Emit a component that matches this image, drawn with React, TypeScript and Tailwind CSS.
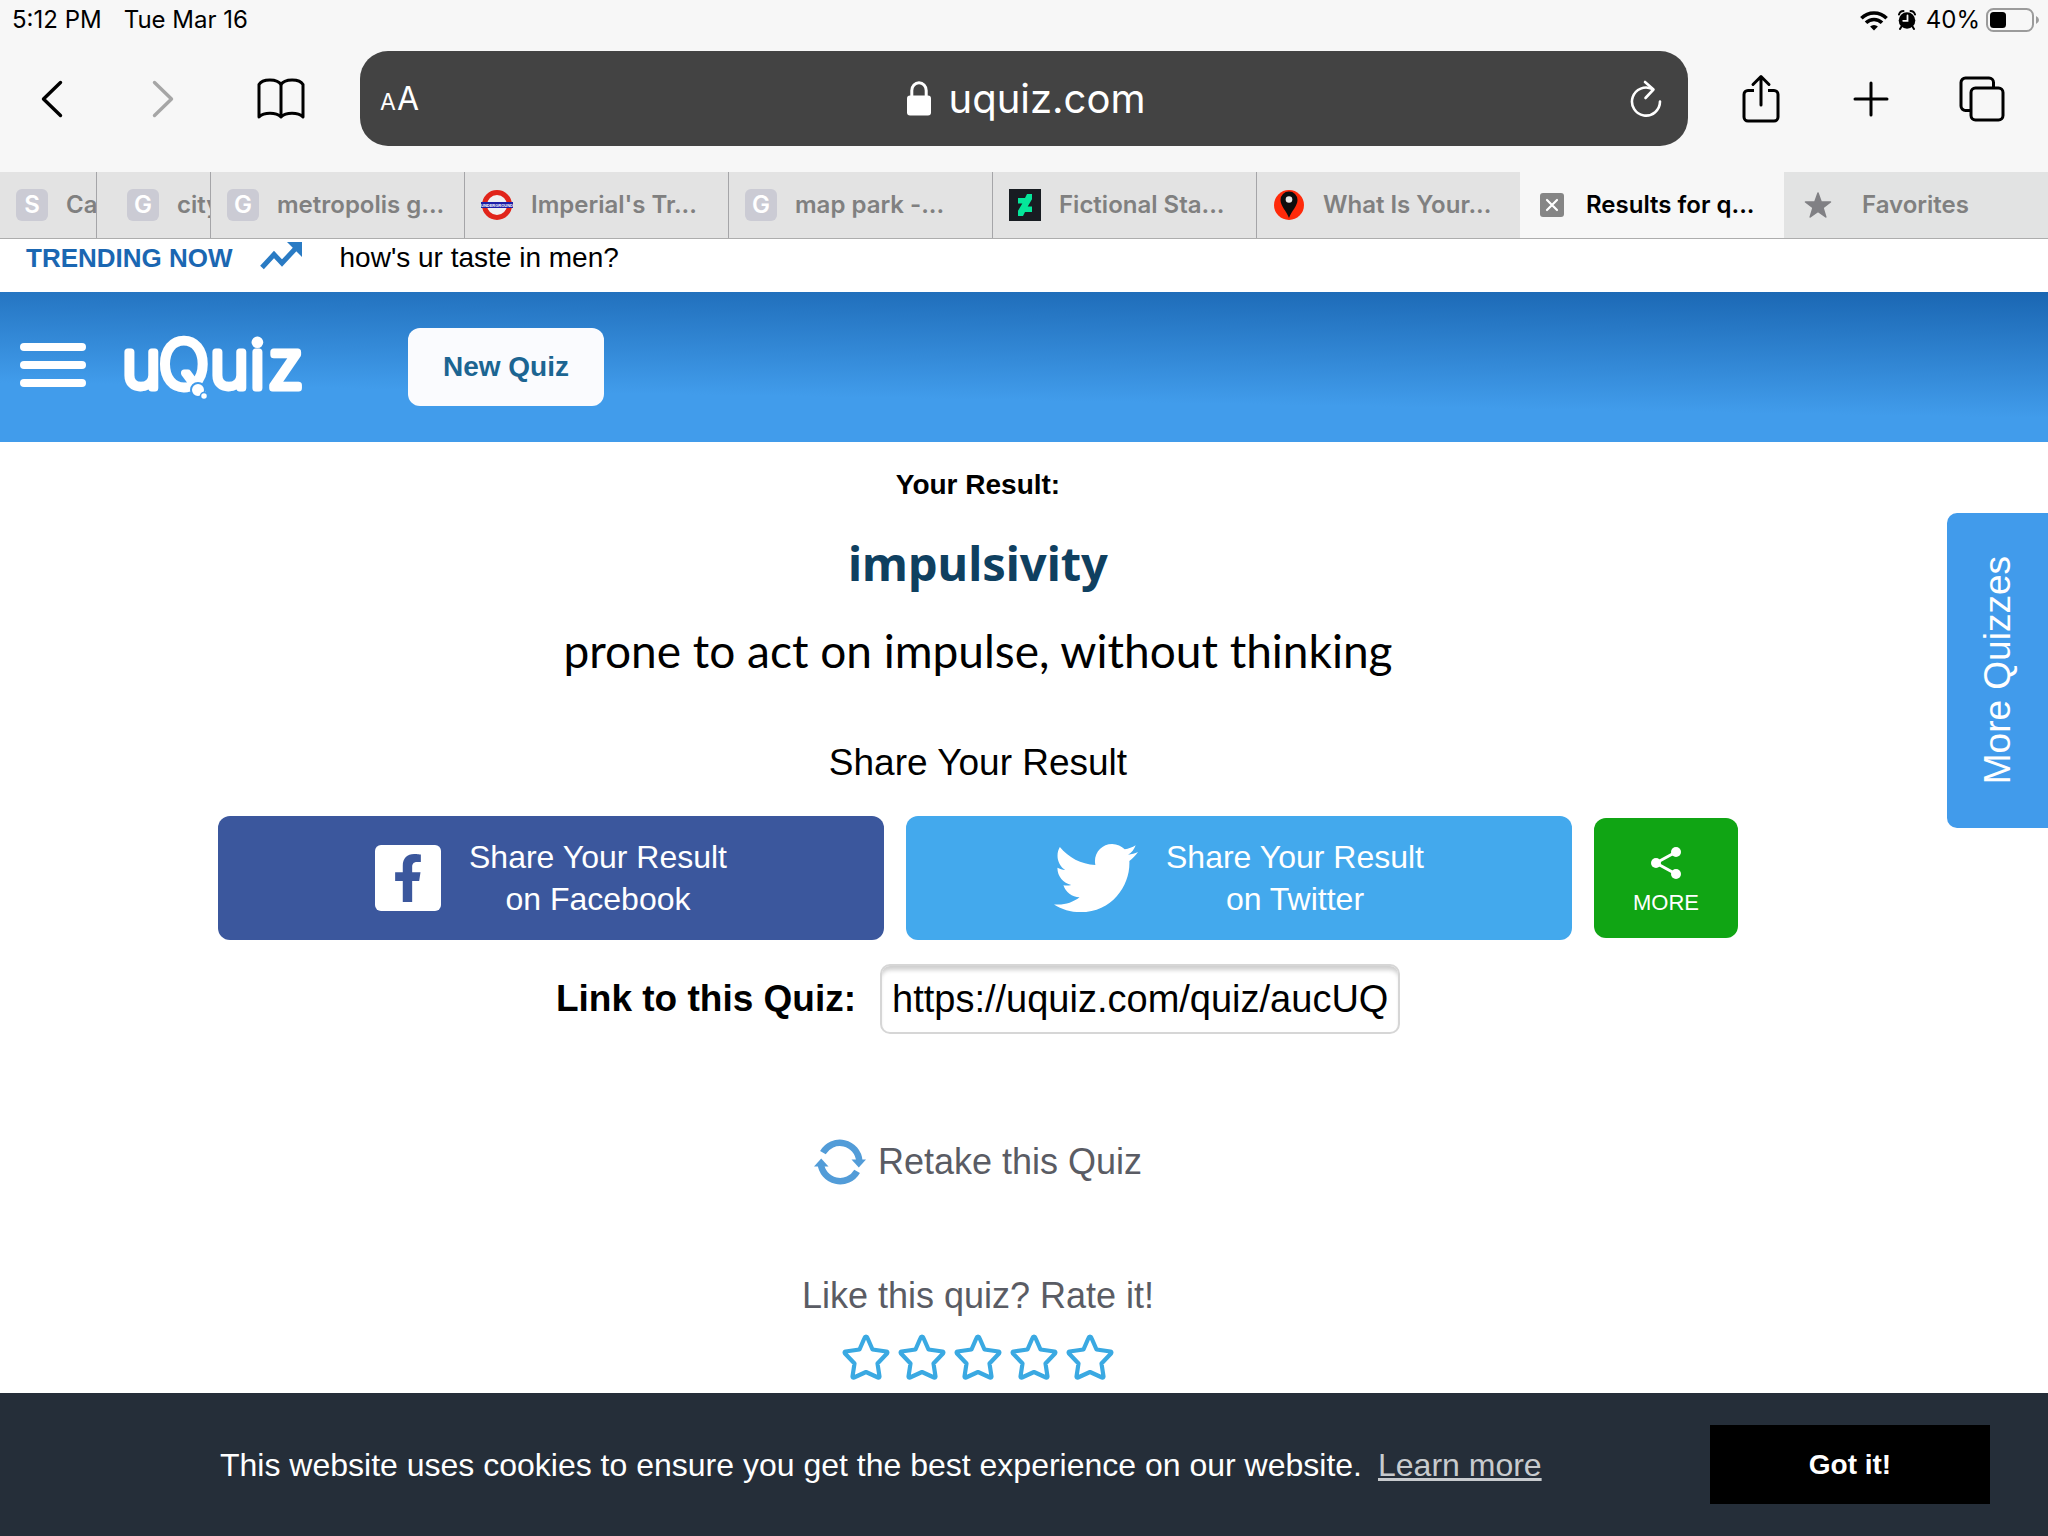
import type { ReactNode } from "react";
import { FaFacebookF, FaTwitter } from "react-icons/fa";

/* ---------- status bar glyphs ---------- */

function WifiIcon() {
  return (
    <svg width="28" height="21" viewBox="0 0 28 21" fill="none" stroke="#000" strokeWidth="3.6" aria-hidden="true">
      <path d="M1.4 8.2a17.8 17.8 0 0 1 25.2 0" />
      <path d="M6 12.8a11.3 11.3 0 0 1 16 0" />
      <path d="M14 20.5l-3.9-4a5.5 5.5 0 0 1 7.8 0z" fill="#000" stroke="none" />
    </svg>
  );
}

function AlarmIcon() {
  return (
    <svg width="18" height="20" viewBox="0 0 18 20" aria-hidden="true">
      <circle cx="9" cy="10.5" r="8.3" fill="#000" />
      <path d="M1 4.5Q2 1 5.5 1M17 4.5Q16 1 12.5 1M3.5 16.5L2 19M14.5 16.5L16 19" stroke="#000" strokeWidth="2" fill="none" strokeLinecap="round" />
      <path d="M9.5 5.5v5.3H5.2" stroke="#f7f7f7" strokeWidth="1.8" fill="none" strokeLinecap="round" />
    </svg>
  );
}

function BatteryIcon() {
  return (
    <svg width="54" height="24" viewBox="0 0 54 24" aria-hidden="true">
      <rect x="1" y="1" width="46" height="22" rx="6.5" fill="none" stroke="#9b9b9b" strokeWidth="2" />
      <rect x="4" y="4" width="16" height="16" rx="3.5" fill="#000" />
      <path d="M50 8q3 1.300 3 4t-3 4z" fill="#9b9b9b" />
    </svg>
  );
}

/* ---------- toolbar icons ---------- */

function BackIcon() {
  return (
    <svg width="22" height="38" viewBox="0 0 22 38" fill="none" stroke="currentColor" strokeWidth="3.4" strokeLinecap="round" strokeLinejoin="round" aria-hidden="true">
      <path d="M19.500 2.500L2.500 19l17 16.500" />
    </svg>
  );
}

function ForwardIcon() {
  return (
    <svg width="22" height="38" viewBox="0 0 22 38" fill="none" stroke="currentColor" strokeWidth="3.4" strokeLinecap="round" strokeLinejoin="round" aria-hidden="true">
      <path d="M2.500 2.500L19.500 19l-17 16.500" />
    </svg>
  );
}

function BookIcon() {
  return (
    <svg width="48" height="42" viewBox="0 0 48 42" fill="none" stroke="currentColor" strokeWidth="3" strokeLinejoin="round" aria-hidden="true">
      <path d="M24 6.500C20.500 .5 5.500.2 2 6.500V39c5-5 17-5 22 0 5-5 17-5 22 0V6.500C42.500.2 27.500.5 24 6.500z" />
      <path d="M24 6.500V39" />
    </svg>
  );
}

function LockIcon() {
  return (
    <svg width="24" height="35" viewBox="0 0 24 35" aria-hidden="true">
      <path d="M4.800 17V9.500a7.200 7.800 0 0 1 14.400 0V17" fill="none" stroke="#fff" strokeWidth="3" />
      <rect x="0" y="14.500" width="24" height="20" rx="3" fill="#fff" />
    </svg>
  );
}

function ReloadIcon() {
  return (
    <svg width="32" height="38" viewBox="0 0 32 38" fill="none" stroke="#fff" strokeWidth="2.600" strokeLinecap="round" strokeLinejoin="round" aria-hidden="true">
      <path d="M30 21.500A14 14 0 1 1 22.500 9.200" />
      <path d="M15 2l8.500 7.500L15.500 18" />
    </svg>
  );
}

function ShareIcon() {
  return (
    <svg width="38" height="50" viewBox="0 0 38 50" fill="none" stroke="currentColor" strokeWidth="3" strokeLinecap="round" strokeLinejoin="round" aria-hidden="true">
      <path d="M12 16.500H6a4 4 0 0 0-4 4V43a4 4 0 0 0 4 4h26a4 4 0 0 0 4-4V20.500a4 4 0 0 0-4-4h-6" strokeLinecap="butt" />
      <path d="M19 31V3M11 10.500L19 2.500l8 8" />
    </svg>
  );
}

function PlusIcon() {
  return (
    <svg width="36" height="36" viewBox="0 0 36 36" fill="none" stroke="currentColor" strokeWidth="3" strokeLinecap="round" aria-hidden="true">
      <path d="M18 2v32M2 18h32" />
    </svg>
  );
}

function TabsIcon() {
  return (
    <svg width="46" height="46" viewBox="0 0 46 46" fill="none" stroke="currentColor" strokeWidth="3" aria-hidden="true">
      <path d="M12 34.500H6.500a4.500 4.500 0 0 1-4.500-4.500V6.500A4.500 4.500 0 0 1 6.500 2H30a4.500 4.500 0 0 1 4.500 4.500V12" />
      <rect x="12" y="12" width="32" height="32" rx="4.500" />
    </svg>
  );
}

/* ---------- tab favicons ---------- */

function LetterFavicon({ letter }: { letter: string }) {
  return (
    <span className="flex size-8 shrink-0 items-center justify-center rounded-md bg-[#cbcbd4] text-2xl text-white">
      {letter}
    </span>
  );
}

function UndergroundFavicon() {
  return (
    <svg className="shrink-0" width="32" height="32" viewBox="0 0 32 32" aria-hidden="true">
      <circle cx="16" cy="16" r="12.500" fill="#f1f1f1" stroke="#e1251b" strokeWidth="5" />
      <rect x="0" y="13" width="32" height="6" fill="#1c1fa8" />
      <text x="16" y="17.500" textAnchor="middle" fontSize="4" fontWeight="700" fill="#fff" fontFamily="Liberation Sans, sans-serif">
        UNDERGROUND
      </text>
    </svg>
  );
}

function DeviantFavicon() {
  return (
    <svg className="shrink-0" width="32" height="32" viewBox="0 0 32 32" aria-hidden="true">
      <rect width="32" height="32" fill="#181c22" />
      <path d="M18 5h5v5.200l-4.300 7.300H23V23h-7l-2 4H9v-5.200l4.300-7.300H9V9h7z" fill="#05e69a" />
    </svg>
  );
}

function PinFavicon() {
  return (
    <svg className="shrink-0" width="32" height="32" viewBox="0 0 32 32" aria-hidden="true">
      <circle cx="16" cy="16" r="15" fill="#ff2a0a" />
      <path d="M16 29C13.500 22 7.500 17 7.500 11a8.500 8.500 0 0 1 17 0c0 6-6 11-8.500 18z" fill="#0d0d0d" />
      <circle cx="16" cy="10.500" r="3.300" fill="#e8e8e8" />
    </svg>
  );
}

function CloseFavicon() {
  return (
    <svg className="shrink-0" width="24" height="24" viewBox="0 0 24 24" aria-hidden="true">
      <rect width="24" height="24" rx="3" fill="#858585" />
      <path d="M7 7l10 10M17 7L7 17" stroke="#fff" strokeWidth="2.200" strokeLinecap="round" />
    </svg>
  );
}

function FavoriteStar() {
  return (
    <svg className="shrink-0" width="28" height="26" viewBox="0 0 28 26" aria-hidden="true">
      <path d="M14 1l3.200 9H26.500l-7.500 5.700L21.800 25 14 19.500 6.200 25 9 15.700 1.500 10h9.300z" fill="#808084" stroke="#808084" strokeWidth="1.500" strokeLinejoin="round" />
    </svg>
  );
}

/* ---------- page icons ---------- */

function TrendIcon() {
  return (
    <svg width="42" height="28" viewBox="0 0 42 28" aria-hidden="true">
      <path d="M2 25.500L14 12.500l8 8.500L36 6" fill="none" stroke="#2a7bc4" strokeWidth="5" />
      <path d="M27 0h15v15z" fill="#2a7bc4" />
    </svg>
  );
}

function Logo() {
  return (
    <svg className="overflow-visible" width="184" height="84" viewBox="0 -8 184 84" role="img" aria-label="uQuiz">
      <text
        x="0 37 88 128 146"
        y="55"
        fontFamily="Inter, sans-serif"
        fontWeight="200"
        fontSize="66"
        fill="#fff"
        stroke="#fff"
        strokeWidth="7"
        strokeLinejoin="round"
      >
        uQuiz
      </text>
      <circle cx="76" cy="57" r="7" fill="#fff" stroke="#409aea" strokeWidth="2" />
      <circle cx="82" cy="63" r="3.500" fill="#fff" stroke="#409aea" strokeWidth="1.500" />
    </svg>
  );
}

function ShareNodesIcon() {
  return (
    <svg width="30" height="32" viewBox="0 0 30 32" aria-hidden="true">
      <path d="M25 5L5 16l20 11" fill="none" stroke="#fff" strokeWidth="3" />
      <circle cx="25" cy="5" r="5" fill="#fff" />
      <circle cx="5" cy="16" r="5" fill="#fff" />
      <circle cx="25" cy="27" r="5" fill="#fff" />
    </svg>
  );
}

function RetakeIcon() {
  return (
    <svg width="52" height="46" viewBox="0 0 52 46" aria-hidden="true">
      <g fill="none" stroke="#529cd8" strokeWidth="6.500">
        <path d="M8.900 13.700A19.500 19.500 0 0 1 45.300 22" />
        <path d="M43.100 32.300A19.500 19.500 0 0 1 6.700 24" />
      </g>
      <g fill="#529cd8">
        <path d="M37.500 20.500h14.500L44.800 28.500z" />
        <path d="M14.500 27.500H0L7.200 19.500z" />
      </g>
    </svg>
  );
}

function RatingStar() {
  return (
    <svg width="48" height="46" viewBox="0 0 48 46" fill="none" stroke="#3aa9e2" strokeWidth="4.200" strokeLinejoin="round" aria-hidden="true">
      <path d="M24 2.500Q25 2.500 25.500 4L30.500 15.500 44.500 17.500Q46 18 45 19.500L35.500 29.500 37.500 42.500Q37.500 44 36 43.500L24 38 12 43.500Q10.500 44 10.500 42.500L12.500 29.500 3 19.500Q2 18 3.500 17.500L17.500 15.500 22.500 4Q23 2.500 24 2.500z" />
    </svg>
  );
}

/* ---------- browser tabs ---------- */

type Tab = { title: string; icon: ReactNode; look: string };

const idle = "gap-[18px] border-r border-[#a5a5a8] bg-[#e3e3e3] text-[#808080]";

const tabs: Tab[] = [
  { title: "Ca", icon: <LetterFavicon letter="S" />, look: `${idle} pl-4` },
  { title: "city", icon: <LetterFavicon letter="G" />, look: `${idle} pl-[30px]` },
  { title: "metropolis g...", icon: <LetterFavicon letter="G" />, look: `${idle} pl-4` },
  { title: "Imperial's Tr...", icon: <UndergroundFavicon />, look: `${idle} pl-4` },
  { title: "map park -...", icon: <LetterFavicon letter="G" />, look: `${idle} pl-4` },
  { title: "Fictional Sta...", icon: <DeviantFavicon />, look: `${idle} pl-4` },
  {
    title: "What Is Your...",
    icon: <PinFavicon />,
    look: "gap-[18px] bg-[#e3e3e3] pl-4 text-[#808080]",
  },
  { title: "Results for q...", icon: <CloseFavicon />, look: "gap-[22px] bg-[#f7f7f7] pl-5 text-black" },
  { title: "Favorites", icon: <FavoriteStar />, look: "gap-[30px] bg-[#e2e3e3] pl-5 text-[#808080]" },
];

function BrowserChrome() {
  return (
    <div className="bg-[#f7f7f7] font-['Inter',sans-serif] text-black">
      <div className="flex h-10 items-center justify-between pr-2 pl-3 text-2xl">
        <div className="flex gap-[22px]">
          <span>5:12 PM</span>
          <span>Tue Mar 16</span>
        </div>
        <div className="flex items-center">
          <WifiIcon />
          <span className="ml-2.5">
            <AlarmIcon />
          </span>
          <span className="ml-2.5">40%</span>
          <span className="ml-1.5">
            <BatteryIcon />
          </span>
        </div>
      </div>

      <div className="flex h-[132px] items-center pt-[11px] pb-[26px]">
        <div className="flex items-center pr-[55px] pl-[41px]">
          <button aria-label="Back">
            <BackIcon />
          </button>
          <button aria-label="Forward" className="ml-[89px] text-[#a6a6a6]">
            <ForwardIcon />
          </button>
          <button aria-label="Bookmarks" className="ml-[83px]">
            <BookIcon />
          </button>
        </div>
        <div className="flex h-[95px] flex-1 items-center justify-between rounded-[28px] bg-[#434343] px-5 text-white">
          <button aria-label="Text size" className="flex w-[68px] items-baseline gap-px">
            <span className="text-[23px]">A</span>
            <span className="text-[32px]">A</span>
          </button>
          <button className="flex items-center gap-[18px] text-[40px]">
            <LockIcon />
            uquiz.com
          </button>
          <button aria-label="Reload" className="flex w-16 justify-end pr-1.5">
            <ReloadIcon />
          </button>
        </div>
        <div className="flex items-center pr-[43px] pl-[54px]">
          <button aria-label="Share">
            <ShareIcon />
          </button>
          <button aria-label="New tab" className="ml-[73px]">
            <PlusIcon />
          </button>
          <button aria-label="Show tabs" className="ml-[70px]">
            <TabsIcon />
          </button>
        </div>
      </div>

      <div
        role="tablist"
        className="grid h-[67px] grid-cols-[97fr_114fr_254fr_264fr_264fr_264fr_263fr_264fr_264fr] border-b border-[#adadad]"
      >
        {tabs.map((tab, i) => (
          <button
            key={i}
            role="tab"
            aria-selected={i === 7}
            className={`flex min-w-0 items-center overflow-hidden text-2xl font-semibold whitespace-nowrap ${tab.look}`}
          >
            {tab.icon}
            <span>{tab.title}</span>
          </button>
        ))}
      </div>
    </div>
  );
}

function SiteHeader() {
  return (
    <header>
      <div className="flex h-[53px] items-start pl-[26px]">
        <strong className="pt-[3px] text-[26px] leading-8 text-[#1b67b2]">TRENDING NOW</strong>
        <span className="ml-[27px] pt-[3px]">
          <TrendIcon />
        </span>
        <a href="#trending" className="ml-[38px] pt-[3px] text-[28px] leading-8 text-black">
          how's ur taste in men?
        </a>
      </div>
      <div className="flex h-[150px] items-center bg-[linear-gradient(181deg,#1a66b2_0%,#419ceb_68%)] pl-5">
        <button aria-label="Menu" className="flex w-[66px] flex-col gap-2.5 pb-1">
          <span className="h-2 rounded bg-white" />
          <span className="h-2 rounded bg-white" />
          <span className="h-2 rounded bg-white" />
        </button>
        <a href="#home" className="ml-9">
          <Logo />
        </a>
        <button className="ml-[102px] h-[78px] w-[196px] rounded-xl bg-[#fafbfe] text-[28px] font-bold text-[#1c6592]">
          New Quiz
        </button>
      </div>
    </header>
  );
}

function Result() {
  return (
    <main className="relative flex flex-1 flex-col items-center pr-[92px]">
      <h2 className="mt-[25px] text-[28px] leading-9 font-bold">Your Result:</h2>
      <h1 className="mt-6 font-['Noto_Sans',sans-serif] text-[47px] leading-[72px] font-bold text-[#0f4060]">
        impulsivity
      </h1>
      <p className="mt-4 font-['Lato',sans-serif] text-[46px] leading-[72px]">
        prone to act on impulse, without thinking
      </p>
      <p className="mt-12 text-[37px] leading-[56px]">Share Your Result</p>

      <div className="mt-[25px] flex w-full items-center justify-center gap-[22px] px-[218px] text-white">
        <button className="flex h-[124px] flex-1 items-center justify-center gap-7 rounded-xl bg-[#3b579d] text-[32px] leading-[42px]">
          <span className="flex size-[66px] items-center justify-center rounded-md bg-white">
            <FaFacebookF className="text-[#3b579d]" size={48} />
          </span>
          <span>
            Share Your Result
            <br />
            on Facebook
          </span>
        </button>
        <button className="flex h-[124px] flex-1 items-center justify-center gap-7 rounded-xl bg-[#43a9ed] text-[32px] leading-[42px]">
          <FaTwitter size={84} />
          <span>
            Share Your Result
            <br />
            on Twitter
          </span>
        </button>
        <button className="flex h-[120px] w-36 flex-col items-center justify-center gap-2 rounded-xl bg-[#10a514] pt-2.5 text-[22px] leading-8">
          <ShareNodesIcon />
          MORE
        </button>
      </div>

      <div className="mt-6 flex items-center gap-6">
        <label htmlFor="quiz-link" className="text-[37px] font-bold">
          Link to this Quiz:
        </label>
        <input
          id="quiz-link"
          readOnly
          value="https://uquiz.com/quiz/aucUQ"
          className="h-[70px] w-[520px] rounded-[10px] border-2 border-[#d6d6d6] px-2.5 text-[38px] shadow-[inset_0_6px_4px_-2px_#cfcfcf] outline-none"
        />
      </div>

      <button className="mt-[100px] flex items-center gap-3 text-[36px] leading-[56px] text-[#5a5c64]">
        <RetakeIcon />
        Retake this Quiz
      </button>

      <p className="mt-20 text-[36px] leading-[52px] text-[#5a5c64]">Like this quiz? Rate it!</p>
      <div className="mt-3 flex gap-2 pb-3">
        {[1, 2, 3, 4, 5].map((n) => (
          <button key={n} aria-label={`Rate ${n} out of 5`}>
            <RatingStar />
          </button>
        ))}
      </div>

      <button className="absolute top-[71px] right-0 flex h-[315px] w-[101px] items-center justify-center rounded-l-[10px] bg-[#419beb] text-[37px] text-white">
        <span className="rotate-180 [writing-mode:vertical-rl]">More Quizzes</span>
      </button>
    </main>
  );
}

function CookieBar() {
  return (
    <footer className="flex h-[143px] items-center justify-between bg-[#252e39] pr-[58px] pl-[220px] text-white">
      <p className="text-[32px]">
        This website uses cookies to ensure you get the best experience on our website.
        <a href="#cookies" className="ml-4 text-[#c8cbce] underline">
          Learn more
        </a>
      </p>
      <button className="h-[79px] w-[280px] bg-black text-[28px] font-bold">Got it!</button>
    </footer>
  );
}

export default function App() {
  return (
    <div className="flex min-h-screen flex-col overflow-hidden bg-white font-['Liberation_Sans',sans-serif] text-black">
      <BrowserChrome />
      <SiteHeader />
      <Result />
      <CookieBar />
    </div>
  );
}
